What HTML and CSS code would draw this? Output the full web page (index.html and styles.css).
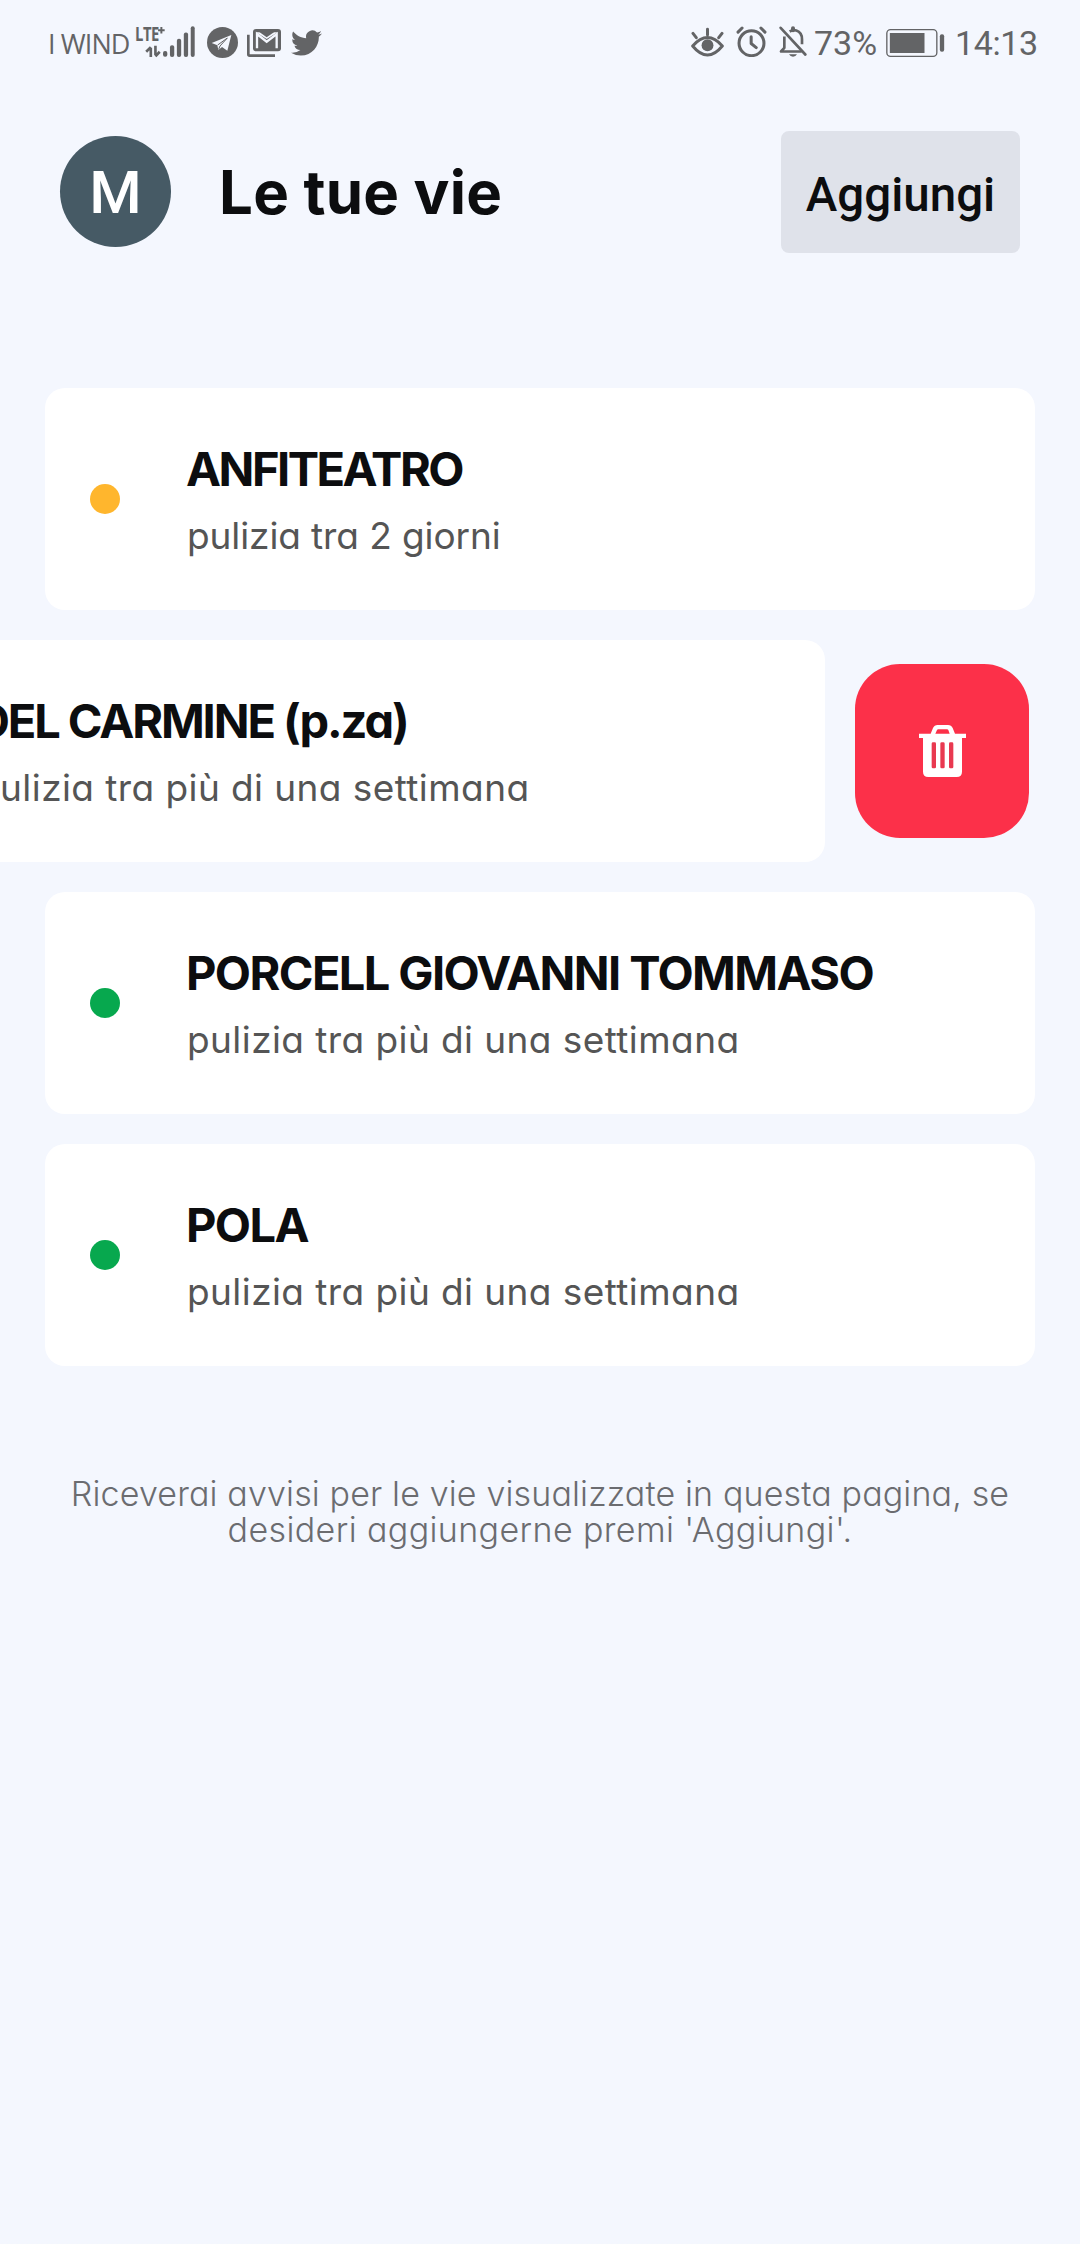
FILE: index.html
```html
<!DOCTYPE html>
<html lang="it">
<head>
<meta charset="utf-8">
<title>Le tue vie</title>
<link rel="stylesheet" href="styles.css">
</head>
<body>
<div class="status">
  <span class="carrier">I WIND</span>
  <div class="network">
    <span class="lte">LTE</span>
    <svg class="signal" viewBox="0 0 180 100">
      <path d="M79 3v20M69 13h20" stroke="currentColor" stroke-width="6"/>
      <path d="M47 94V66M33 78l14-14" stroke="currentColor" stroke-width="8" fill="none"/>
      <path d="M61 60v28M61 92l13-14" stroke="currentColor" stroke-width="8" fill="none"/>
      <g fill="currentColor"><rect x="84" y="76" width="13" height="17" rx="6"/><rect x="105" y="58" width="13" height="36" rx="6"/><rect x="126" y="39" width="13" height="55" rx="6"/><rect x="147" y="20" width="13" height="74" rx="6"/><rect x="168" y="1" width="12" height="93" rx="6"/></g>
    </svg>
  </div>
  <svg class="ic-telegram" viewBox="0 0 93 93"><circle cx="46.500" cy="46.500" r="46.500" fill="currentColor"/><path d="M14 48 73 24 61 71 45 60 34 69 31 55Z" fill="#f4f7fe"/><path d="M32 54 61 33 39 57 35 67" fill="none" stroke="currentColor" stroke-width="3"/></svg>
  <svg class="ic-mail" viewBox="0 0 102 84"><path d="M4 17v59q0 4 4 4h76" fill="none" stroke="currentColor" stroke-width="8"/><rect x="18" y="0" width="84" height="67" rx="9" fill="currentColor"/><path d="M30 58V15l29 23 30-23v43" fill="none" stroke="#f4f7fe" stroke-width="7"/><path d="M27 10h65L59 30Z" fill="#f4f7fe"/><path d="M34 7 59 25 85 7Z" fill="currentColor"/></svg>
  <svg class="ic-bird" viewBox="0 2.250 24 19.500"><path fill="currentColor" d="M23.953 4.570a10 10 0 01-2.825.775 4.958 4.958 0 002.163-2.723c-.951.555-2.005.959-3.127 1.184a4.920 4.920 0 00-8.384 4.482C7.690 8.095 4.067 6.130 1.640 3.162a4.822 4.822 0 00-.666 2.475c0 1.710.870 3.213 2.188 4.096a4.904 4.904 0 01-2.228-.616v.060a4.923 4.923 0 003.946 4.827 4.996 4.996 0 01-2.212.085 4.936 4.936 0 004.604 3.417 9.867 9.867 0 01-6.102 2.105c-.390 0-.779-.023-1.170-.067a13.995 13.995 0 007.557 2.209c9.053 0 13.998-7.496 13.998-13.985 0-.210 0-.420-.015-.630A9.935 9.935 0 0024 4.590z"/></svg>
  <div class="status-right">
    <svg class="ic-eye" viewBox="0 0 100 90"><g fill="none" stroke="currentColor" stroke-width="9" stroke-linecap="round"><path d="M5 57Q50 6 95 57Q50 112 5 57Z" stroke-linejoin="round"/><path d="M50 6v18M6 19l10 13M94 19 84 32"/></g><circle cx="50" cy="55" r="18" fill="currentColor"/></svg>
    <svg class="ic-alarm" viewBox="0 0 92 92"><g fill="none" stroke="currentColor" stroke-width="9" stroke-linecap="round" stroke-linejoin="round"><circle cx="46" cy="51" r="37"/><path d="M45 32v20l15 12M6 18 18 6M74 6l12 12"/></g></svg>
    <svg class="ic-bell" viewBox="0 0 84 92"><g fill="none" stroke="currentColor" stroke-width="8"><path d="M5 5l74 80" stroke-linecap="round"/><path d="M16 31v34L6 76h62M32 16q10-6 20-3 17 6 17 26v15" stroke-linejoin="round"/><path d="M42 6v6" stroke-width="12" stroke-linecap="round"/></g><path d="M30 84h24q-5 8-12 8t-12-8Z" fill="currentColor"/></svg>
    <span class="percent">73%</span>
    <svg class="ic-battery" viewBox="0 0 176 84"><rect x="2" y="2" width="150" height="80" rx="11" fill="none" stroke="currentColor" stroke-width="4"/><rect x="11" y="12" width="104" height="60" fill="currentColor"/><rect x="161" y="16" width="13" height="52" rx="6" fill="currentColor"/></svg>
    <span class="clock">14:13</span>
  </div>
</div>
<header class="header">
  <div class="avatar">M</div>
  <h1 class="heading">Le tue vie</h1>
  <button class="add">Aggiungi</button>
</header>
<main class="list">
  <article class="card">
    <i class="dot dot-soon"></i>
    <div class="info"><h2 class="name name-tight">ANFITEATRO</h2><p class="when when-short">pulizia tra 2 giorni</p></div>
  </article>
  <div class="swiped">
    <article class="card">
      <i class="dot"></i>
      <div class="info"><h2 class="name name-snug">DEL CARMINE (p.za)</h2><p class="when">pulizia tra più di una settimana</p></div>
    </article>
    <button class="delete" aria-label="Elimina">
      <svg viewBox="0 0 141 156"><path d="M0 26H35L42 9Q46 0 56 0H87Q97 0 101 9L108 26H141V39H129V140Q129 156 113 156H28Q12 156 12 140V39H0ZM49 26H92L88 15Q87 13 84 13H58Q55 13 54 15Z" fill="#fff" fill-rule="evenodd"/><g fill="#e93950"><rect x="38" y="52" width="13" height="78" rx="4"/><rect x="64" y="52" width="13" height="78" rx="4"/><rect x="90" y="52" width="13" height="78" rx="4"/></g></svg>
    </button>
  </div>
  <article class="card">
    <i class="dot"></i>
    <div class="info"><h2 class="name">PORCELL GIOVANNI TOMMASO</h2><p class="when">pulizia tra più di una settimana</p></div>
  </article>
  <article class="card">
    <i class="dot"></i>
    <div class="info"><h2 class="name">POLA</h2><p class="when">pulizia tra più di una settimana</p></div>
  </article>
</main>
<p class="note">Riceverai avvisi per le vie visualizzate in questa pagina, se <span class="note-end">desideri aggiungerne premi 'Aggiungi'.</span></p>
</body>
</html>
```
FILE: styles.css
```css
* { box-sizing: border-box; }
body {
  margin: 0;
  width: 1080px;
  min-height: 2244px;
  overflow-x: hidden;
  background: #f4f7fe;
  color: #0c0d0f;
  font-family: Inter, "Liberation Sans", sans-serif;
  font-feature-settings: "cv11";
}
h1, h2, p { margin: 0; }
button { border: 0; padding: 0; font: inherit; color: inherit; }
svg { display: block; flex: none; }

.status {
  display: flex;
  align-items: flex-start;
  height: 86px;
  padding: 26px 42px 0 48px;
  color: #636466;
}
.carrier { width: 87px; font: 27px/35px "Open Sans", sans-serif; letter-spacing: -.9px; white-space: nowrap; }
.network { display: flex; width: 61px; }
.lte { width: 0; font: bold 20px/16px "Open Sans", sans-serif; letter-spacing: -.6px; transform: scaleX(.74); transform-origin: 0 0; }
.signal { width: 60px; height: 33px; }
.ic-telegram { width: 31px; height: 31px; margin: 1px 9px 0 11px; }
.ic-mail { width: 34px; height: 28px; margin: 3px 10px 0 0; }
.ic-bird { width: 31px; height: 26px; margin-top: 4px; }
.status-right { display: flex; margin-left: auto; }
.ic-eye { width: 33px; height: 30px; margin: 1px 12px 0 0; }
.ic-alarm { width: 31px; height: 31px; margin-right: 12px; }
.ic-bell { width: 28px; height: 31px; margin-right: 7px; }
.percent, .clock { font: 34px/34px Roboto, sans-serif; white-space: nowrap; }
.percent { width: 72px; }
.ic-battery { width: 59px; height: 28px; margin: 3px 10px 0 0; }
.clock { width: 83px; letter-spacing: -.4px; }

.header { display: flex; align-items: center; padding: 45px 60px 0; height: 167px; }
.avatar {
  width: 111px; height: 111px; margin-bottom: 1px; border-radius: 50%;
  background: #465a65; color: #fff;
  font: 500 60px/114px Roboto, sans-serif; text-align: center;
}
.heading { margin-left: 48px; font-size: 60px; line-height: 72px; font-weight: 700; letter-spacing: .2px; }
.add {
  width: 239px; height: 122px; margin-left: auto; padding-top: 7px;
  border-radius: 8px; background: #dfe2ea;
  font: 500 47.5px/115px Roboto, sans-serif;
}

.list { display: flex; flex-direction: column; gap: 30px; padding: 135px 45px 0; }
.card {
  display: flex; align-items: center; flex: none;
  width: 990px; height: 222px; padding-left: 45px;
  border-radius: 20px; background: #fff;
}
.dot { width: 30px; height: 30px; margin-right: 66px; border-radius: 50%; background: #07a84e; }
.dot-soon { background: #ffb62d; }
.name { font-size: 47px; line-height: 56px; font-weight: 700; letter-spacing: -1.6px; white-space: nowrap; }
.name-snug { letter-spacing: -2.1px; }
.name-tight { letter-spacing: -2.5px; }
.when { margin: 17px 0 0 1px; font-size: 37px; line-height: 44px; letter-spacing: .42px; color: #555; white-space: nowrap; }
.when-short { letter-spacing: -.1px; }
.swiped { display: flex; align-items: center; gap: 30px; margin-left: -210px; }
.delete {
  display: grid; place-items: center; flex: none;
  width: 174px; height: 174px; border-radius: 45px; background: #fc3049;
}
.delete svg { width: 47px; height: 52px; }

.note { margin-top: 110px; text-align: center; font-size: 34px; line-height: 36px; font-weight: 300; letter-spacing: .14px; color: #6b6c70; }
.note-end { display: block; letter-spacing: .38px; }
```
